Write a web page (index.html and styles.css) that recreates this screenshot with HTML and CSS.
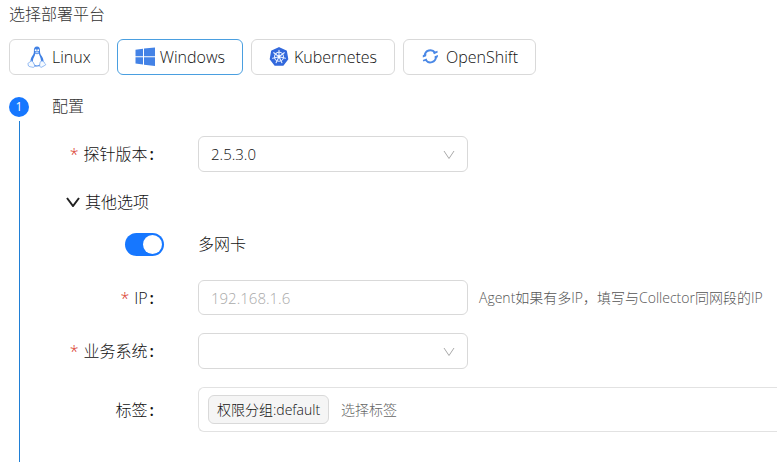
FILE: index.html
```
<!DOCTYPE html>
<html lang="zh-CN">
<head>
<meta charset="utf-8">
<meta name="viewport" content="width=device-width, initial-scale=1">
<title>选择部署平台</title>
<link rel="stylesheet" href="styles.css">
</head>
<body>
<main class="page">
  <h1 class="title">选择部署平台</h1>
  <div class="platforms">
    <button type="button" class="platform">
      <svg class="icon" viewBox="0 0 20 22" aria-hidden="true">
        <path d="M10 .5C7.6.5 6.8 2.200 6.900 4.800 7 7 6.600 8.100 5.200 10 3.800 12 3.400 14 3.500 16.500L6.500 20Q10 21.200 13.700 19.800L16.500 16.500C16.800 13.500 15.800 11.300 14.300 9.400 13 7.700 13 6.400 13 4.500 13 1.800 12.200.5 10 .5Z" fill="#3f80e4"/>
        <path d="M8.300 7.500Q10 9 11.800 7.500C12.200 9.500 14 11.500 14 15Q13.500 19.500 10 19.500T5.800 15C6 11.500 8.200 10 8.300 7.500Z" fill="#fff"/>
        <circle cx="8.700" cy="4.300" r="1" fill="#fff"/><circle cx="11.200" cy="4.300" r="1" fill="#fff"/>
        <path d="M8 6.300 10 5.300 12 6.300 10 7.700Z" fill="#b9d4fb"/>
        <path d="M4 14.800C3.200 16.600 1.300 16.400 1.100 17.300S1.300 19.400 1.500 20 4.500 21 5.800 21.300 7.900 20.500 7.600 19.300 5.500 14.500 4 14.800ZM15.300 15C16.100 15.600 17.300 15.500 17.300 16.600S19 18 18.800 18.600 16 20.300 15 21 12.700 21.100 12.700 19.500 13 14.500 15.300 15Z" fill="#f5faff" stroke="#76a7ef" stroke-width=".8"/>
      </svg>
      <span>Linux</span>
    </button>
    <button type="button" class="platform platform-active" aria-pressed="true">
      <svg class="icon" viewBox="0 0 20 20" aria-hidden="true">
        <path d="M.5 2.800 8 1.800V9.200H.5ZM9 1.600 20 .5V9.200H9ZM.5 10.200H8V17.600L.5 16.600ZM9 10.200H20V19L9 17.800Z" fill="#4382e6"/>
      </svg>
      <span>Windows</span>
    </button>
    <button type="button" class="platform">
      <svg class="icon" viewBox="0 0 20 20" aria-hidden="true">
        <path d="M10 .8 17.200 4.200 18.600 12 14 18H6L1.400 12 2.800 4.200Z" fill="#3268dc" stroke="#3268dc" stroke-width="1.400" stroke-linejoin="round"/>
        <g fill="none" stroke="#e6efff" stroke-width="1.100" stroke-linecap="round">
          <circle cx="10" cy="9.800" r="4.500"/>
          <path d="M10 9.800V3.200M10 9.800 15.200 5.700M10 9.800 16.400 11.300M10 9.800 12.900 15.700M10 9.800 7.100 15.700M10 9.800 3.600 11.300M10 9.800 4.800 5.700"/>
        </g>
        <circle cx="10" cy="9.800" r="1.200" fill="#fff"/>
      </svg>
      <span>Kubernetes</span>
    </button>
    <button type="button" class="platform">
      <svg class="icon" viewBox="0 0 20 20" aria-hidden="true">
        <g fill="none" stroke="#4a88e6" stroke-width="2">
          <path d="M3.700 8.600A5.700 5.700 0 0 1 14 5.600"/>
          <path d="M15 10A5.700 5.700 0 0 1 4.700 13"/>
        </g>
        <path d="M1.800 8.300 5.400 7 5.100 9.200 1.800 10.600ZM12 5.600 16.400 3.700 16.700 5.600 13 7.200ZM13.600 9.200 17 8 16.800 10.200 13.800 11.300ZM1.800 12.900 5.600 11.400 6.200 13.200 2.400 14.600Z" fill="#4a88e6"/>
      </svg>
      <span>OpenShift</span>
    </button>
  </div>

  <section class="step">
    <div class="rail"><span class="badge">1</span></div>
    <form class="form">
      <h2 class="step-title">配置</h2>
      <div class="row">
        <label class="label required" for="version">探针版本<span class="colon">:</span></label>
        <div class="select-wrap">
          <select id="version" class="control"><option>2.5.3.0</option></select>
          <svg class="arrow" viewBox="0 0 12 10" aria-hidden="true"><path d="M1 1 6 8.500 11 1"/></svg>
        </div>
      </div>
      <button type="button" class="toggle" aria-expanded="true">
        <svg class="chevron" viewBox="0 0 14 10" aria-hidden="true"><path d="M1 1 7 9 13 1"/></svg>
        <span>其他选项</span>
      </button>
      <div class="row row-switch">
        <input id="multi" class="switch" type="checkbox" role="switch" checked>
        <label for="multi">多网卡</label>
      </div>
      <div class="row">
        <label class="label required" for="ip">IP<span class="colon">:</span></label>
        <div class="field">
          <input id="ip" class="control" type="text" placeholder="192.168.1.6">
          <span class="hint">Agent如果有多IP，填写与Collector同网段的IP</span>
        </div>
      </div>
      <div class="row">
        <label class="label required" for="system">业务系统<span class="colon">:</span></label>
        <div class="select-wrap">
          <select id="system" class="control"><option></option></select>
          <svg class="arrow" viewBox="0 0 12 10" aria-hidden="true"><path d="M1 1 6 8.500 11 1"/></svg>
        </div>
      </div>
      <div class="row">
        <label class="label" for="tags">标签<span class="colon">:</span></label>
        <div class="tags">
          <span class="tag">权限分组:default</span>
          <input id="tags" class="tag-input" type="text" placeholder="选择标签">
        </div>
      </div>
    </form>
  </section>
</main>
</body>
</html>
```
FILE: styles.css
```
* {
  box-sizing: border-box;
}

body {
  margin: 0;
  background: #fff;
  color: #111;
  font: 300 15px/24px "Open Sans", "Noto Sans CJK SC", sans-serif;
  overflow: hidden;
}

button,
input,
select {
  font: inherit;
  color: inherit;
}

.page {
  display: flex;
  flex-direction: column;
  min-height: 100vh;
  padding: 2px 0 0 9px;
}

.title,
.step-title {
  margin: 0;
  font-size: 16px;
  font-weight: 300;
  color: #333;
}

.platforms {
  display: flex;
  gap: 8px;
  margin-top: 13px;
}

.platform {
  display: flex;
  align-items: center;
  gap: 5px;
  height: 36px;
  padding: 0 17px;
  border: 1px solid #d9d9d9;
  border-radius: 6px;
  background: #fff;
  font-size: 16px;
}

.platform-active {
  border-color: #4a9fe0;
}

.icon {
  width: 20px;
  height: 22px;
}

.step {
  display: flex;
  flex: 1;
  gap: 23px;
  margin-top: 19px;
}

.rail {
  display: flex;
  flex-direction: column;
  gap: 4px;
  margin-top: 3px;
}

.rail::after {
  content: "";
  flex: 1;
  margin-left: 10px;
  border-left: 1px solid #1f7fd6;
}

.badge {
  width: 20px;
  border-radius: 50%;
  background: #1677ff;
  color: #fff;
  font-size: 12px;
  font-weight: 400;
  line-height: 20px;
  text-align: center;
}

.form {
  flex: 1;
  min-width: 0;
}

.step-title {
  margin-bottom: 18px;
}

.row {
  display: grid;
  grid-template-columns: 102px minmax(0, 1fr);
  align-items: center;
  column-gap: 44px;
  margin-bottom: 18px;
}

.label {
  font-size: 16px;
  text-align: right;
  white-space: nowrap;
}

.required::before {
  content: "*";
  margin-right: 5px;
  color: #d9362b;
}

.colon {
  margin-left: 2px;
  font-weight: 600;
}

.select-wrap {
  position: relative;
  width: 270px;
}

.control {
  display: block;
  width: 270px;
  height: 36px;
  padding: 0 12px;
  border: 1px solid #d9d9d9;
  border-radius: 6px;
  background: #fff;
  appearance: none;
}

input.control {
  height: 35px;
}

.control::placeholder {
  color: #aaa;
}

.arrow {
  position: absolute;
  top: 14px;
  right: 13px;
  width: 12px;
  height: 10px;
  fill: none;
  stroke: #aaa;
  pointer-events: none;
}

.toggle {
  display: flex;
  align-items: center;
  gap: 5px;
  margin-left: 14px;
  padding: 0;
  border: 0;
  background: none;
  font-size: 16px;
}

.chevron {
  width: 14px;
  height: 10px;
  fill: none;
  stroke: #222;
  stroke-width: 2;
}

.row-switch {
  grid-template-columns: 112px 1fr;
  column-gap: 34px;
  margin: 18px 0 24px;
  font-size: 16px;
}

.switch {
  display: flex;
  align-items: center;
  justify-content: flex-end;
  justify-self: end;
  width: 39px;
  height: 23px;
  margin: 0;
  padding: 2px;
  border-radius: 12px;
  background: #1677ff;
  appearance: none;
}

.switch::before {
  content: "";
  width: 19px;
  height: 19px;
  border-radius: 50%;
  background: #fff;
}

.switch:not(:checked) {
  justify-content: flex-start;
  background: #bfbfbf;
}

.field {
  display: flex;
  align-items: center;
  gap: 11px;
}

.hint {
  color: #555;
  font-size: 14px;
  white-space: nowrap;
}

.tags {
  display: flex;
  align-items: center;
  gap: 12px;
  padding: 7px 9px;
  border: 1px solid #e2e2e2;
  border-right: 0;
  border-radius: 6px 0 0 6px;
}

.tag {
  padding: 2px 8px;
  border: 1px solid #d9d9d9;
  border-radius: 6px;
  background: #f5f5f5;
  font-size: 14px;
  line-height: 23px;
  white-space: nowrap;
}

.tag-input {
  flex: 1;
  min-width: 0;
  padding: 0;
  border: 0;
  background: none;
  font-size: 14px;
}

.tag-input::placeholder {
  color: #666;
}
```
